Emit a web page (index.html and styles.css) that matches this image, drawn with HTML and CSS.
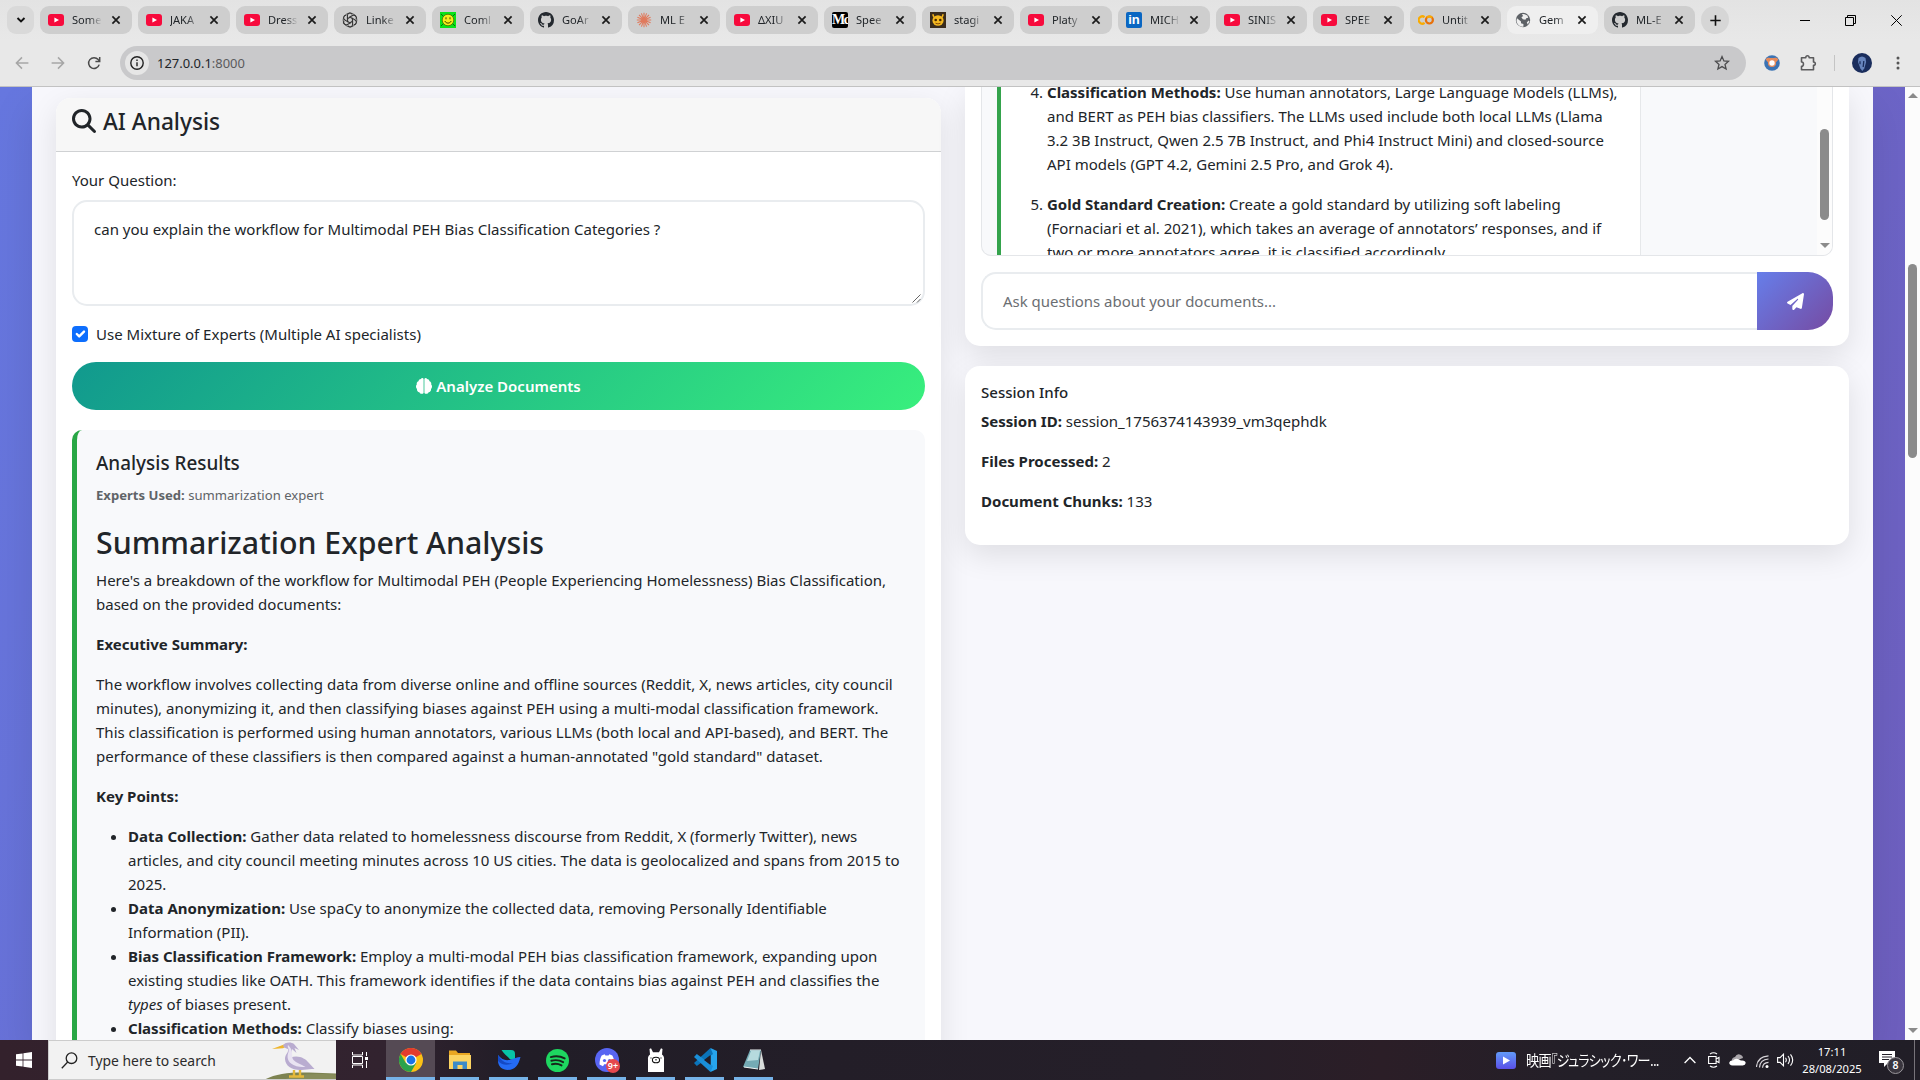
FILE: index.html
```html
<!DOCTYPE html>
<html lang="en">
<head>
<meta charset="utf-8">
<title>Gemini Document Analysis</title>
<link rel="stylesheet" href="styles.css">
</head>
<body>
<svg class="defs" aria-hidden="true">
  <symbol id="yt" viewBox="0 0 16 16"><rect y="2" width="16" height="12" rx="3" fill="#f70a3c"/><path d="M6.4 5.4v5.2L11 8z" fill="#fff"/></symbol>
  <symbol id="x" viewBox="0 0 10 10"><path d="M1.4 1.4l7.2 7.2M8.6 1.4L1.4 8.6" stroke="#1b1b1b" stroke-width="1.7" fill="none"/></symbol>
  <symbol id="gh" viewBox="0 0 16 16"><path fill="#24292f" d="M8 0C3.58 0 0 3.58 0 8c0 3.54 2.29 6.53 5.47 7.59.4.07.55-.17.55-.38 0-.19-.01-.82-.01-1.49-2.01.37-2.53-.49-2.69-.94-.09-.23-.48-.94-.82-1.13-.28-.15-.68-.52-.01-.53.63-.01 1.08.58 1.23.82.72 1.21 1.87.87 2.33.66.07-.52.28-.87.51-1.07-1.78-.2-3.64-.89-3.64-3.95 0-.87.31-1.59.82-2.15-.08-.2-.36-1.02.08-2.12 0 0 .67-.21 2.2.82.64-.18 1.32-.27 2-.27s1.36.09 2 .27c1.53-1.04 2.2-.82 2.2-.82.44 1.1.16 1.92.08 2.12.51.56.82 1.27.82 2.15 0 3.07-1.87 3.75-3.65 3.95.29.25.54.73.54 1.48 0 1.07-.01 1.93-.01 2.2 0 .21.15.46.55.38A8.01 8.01 0 0 0 16 8c0-4.42-3.58-8-8-8"/></symbol>
  <symbol id="oa" viewBox="0 0 16 16"><g fill="none" stroke="#333" stroke-width="1.1"><path id="petal" d="M8 5.2L5.4 6.7V3.6a2.6 2.6 0 0 1 4.9-1.2"/><use href="#petal" transform="rotate(60 8 8)"/><use href="#petal" transform="rotate(120 8 8)"/><use href="#petal" transform="rotate(180 8 8)"/><use href="#petal" transform="rotate(240 8 8)"/><use href="#petal" transform="rotate(300 8 8)"/><circle cx="8" cy="8" r="6.9" stroke-width=".7"/></g></symbol>
</svg>

<header class="browser">
  <div class="tabstrip">
    <button class="tab-search"><svg width="10" height="8" viewBox="0 0 10 8"><path d="M1.5 2L5 5.5 8.5 2" fill="none" stroke="#111" stroke-width="1.9"/></svg></button>
    <div class="tabs">
      <div class="tab"><svg class="fav"><use href="#yt"/></svg><span>Some</span><svg class="close"><use href="#x"/></svg></div>
      <div class="tab"><svg class="fav"><use href="#yt"/></svg><span>JAKA</span><svg class="close"><use href="#x"/></svg></div>
      <div class="tab"><svg class="fav"><use href="#yt"/></svg><span>Dress</span><svg class="close"><use href="#x"/></svg></div>
      <div class="tab"><svg class="fav"><use href="#oa"/></svg><span>Linke</span><svg class="close"><use href="#x"/></svg></div>
      <div class="tab"><svg class="fav" viewBox="0 0 16 16"><path d="M0 0h16v16H0z" fill="#0be31a"/><circle cx="8" cy="8" r="5.8" fill="#f6ee1b" stroke="#4c6a00" stroke-width=".8"/><path d="M6 5.3v2M10 5.3v2M4.8 9c1.2 2.8 5.2 2.8 6.4 0" stroke="#3c3c00" fill="none"/><path d="M1 2l2 2M15 2l-2 2M1 14l2-2M15 14l-2-2" stroke="#096b0c"/></svg><span>Coml</span><svg class="close"><use href="#x"/></svg></div>
      <div class="tab"><svg class="fav"><use href="#gh"/></svg><span>GoAr</span><svg class="close"><use href="#x"/></svg></div>
      <div class="tab"><svg class="fav" viewBox="0 0 16 16"><path d="M8 .8v14.400M.8 8h14.400M3 2.800l10 10.400M13 2.800L3 13.200M5.400 1.400l5.200 13.200M10.600 1.400L5.400 14.600M1.400 5.200l13.200 5.600M14.600 5.200L1.400 10.800" stroke="#e07a5d" stroke-width="1.100"/></svg><span>ML E</span><svg class="close"><use href="#x"/></svg></div>
      <div class="tab"><svg class="fav"><use href="#yt"/></svg><span>ΔXIU</span><svg class="close"><use href="#x"/></svg></div>
      <div class="tab"><b class="fav medium">M<i>c</i></b><span>Spee</span><svg class="close"><use href="#x"/></svg></div>
      <div class="tab"><svg class="fav" viewBox="0 0 16 16"><path d="M0 0h16v16H0z" fill="#3a2c1d"/><path d="M4 5.500L2.800 2.200M12 5.500l1.200-3.300" stroke="#f2b21c" stroke-width="1.600"/><ellipse cx="8" cy="8.500" rx="5.600" ry="5.200" fill="#f5b920"/><circle cx="5.700" cy="8" r="1.300" fill="#4a2a00"/><circle cx="10.300" cy="8" r="1.300" fill="#4a2a00"/><path d="M5.500 11.200q2.500 1.400 5 0" stroke="#8c4d05" fill="none"/></svg><span>stagi</span><svg class="close"><use href="#x"/></svg></div>
      <div class="tab"><svg class="fav"><use href="#yt"/></svg><span>Platy</span><svg class="close"><use href="#x"/></svg></div>
      <div class="tab"><b class="fav linkedin">in</b><span>MICH</span><svg class="close"><use href="#x"/></svg></div>
      <div class="tab"><svg class="fav"><use href="#yt"/></svg><span>SINIS</span><svg class="close"><use href="#x"/></svg></div>
      <div class="tab"><svg class="fav"><use href="#yt"/></svg><span>SPEE</span><svg class="close"><use href="#x"/></svg></div>
      <div class="tab"><svg class="fav" viewBox="0 0 16 16"><g fill="none" stroke-width="2.2"><path d="M6.6 5.2a3.6 3.6 0 1 0 0 5.6" stroke="#f9ab00"/><circle cx="11.4" cy="8" r="3.5" stroke="#e8710a"/><path d="M9 5.6a3.5 3.5 0 0 1 4.9 0" stroke="#f9ab00"/></g></svg><span>Untit</span><svg class="close"><use href="#x"/></svg></div>
      <div class="tab active"><svg class="fav" viewBox="0 0 16 16"><circle cx="8" cy="8" r="7.2" fill="#5d6166"/><path d="M2 6.2l4 3.4v1.6L8.4 12v2.8c-4 .4-7-3-6.9-6.6zM6.8 2.2L9 2l3.4 1.600.8 2.200-2 .4-.8 1.600-2.600-.6-1.400-2L8.200 4zM13.600 8.400l.8 1-1.600 3-1-2z" fill="#efefef"/></svg><span>Gem</span><svg class="close"><use href="#x"/></svg></div>
      <div class="tab"><svg class="fav"><use href="#gh"/></svg><span>ML-E</span><svg class="close"><use href="#x"/></svg></div>
    </div>
    <button class="new-tab"><svg width="11" height="11" viewBox="0 0 11 11"><path d="M5.5.3v10.4M.3 5.5h10.4" stroke="#111" stroke-width="1.6"/></svg></button>
    <div class="window-controls">
      <svg width="10" height="10" viewBox="0 0 10 10"><path d="M0 5.5h10" stroke="#000"/></svg>
      <svg width="11" height="11" viewBox="0 0 11 11"><path d="M.5 2.5h8v8h-8zM2.5 2.5v-2h8v8h-2" fill="none" stroke="#000"/></svg>
      <svg width="11" height="11" viewBox="0 0 11 11"><path d="M.3.3l10.4 10.4M10.7.3L.3 10.7" stroke="#000"/></svg>
    </div>
  </div>
  <div class="toolbar">
    <nav class="nav-buttons">
      <svg width="14" height="14" viewBox="0 0 14 14"><path d="M13.4 7H1.6M7 1.4L1.4 7 7 12.6" fill="none" stroke="#a6a6a6" stroke-width="1.5"/></svg>
      <svg width="14" height="14" viewBox="0 0 14 14"><path d="M.6 7h11.8M7 1.4L12.6 7 7 12.6" fill="none" stroke="#a6a6a6" stroke-width="1.5"/></svg>
      <svg width="14" height="14" viewBox="0 0 14 14"><path d="M12.2 8.6A5.4 5.4 0 1 1 11.2 3.6L12.6 5M12.7 1v4.4H8.4" fill="none" stroke="#4a4a4a" stroke-width="1.5"/></svg>
    </nav>
    <div class="omnibox">
      <span class="site-info"><svg width="14" height="14" viewBox="0 0 14 14"><circle cx="7" cy="7" r="6.2" fill="none" stroke="#222" stroke-width="1.4"/><path d="M7 6.2v4M7 3.6v1.4" stroke="#222" stroke-width="1.4"/></svg></span>
      <span class="url">127.0.0.1<em>:8000</em></span>
      <svg class="star" width="16" height="16" viewBox="0 0 16 16"><path d="M8 1.6l1.9 4.3 4.6.4L11 9.4l1.1 4.6L8 11.6 3.9 14 5 9.4 1.5 6.3l4.6-.4z" fill="none" stroke="#4c4c4e" stroke-width="1.3"/></svg>
    </div>
    <div class="extensions">
      <svg width="16" height="16" viewBox="0 0 16 16"><circle cx="8" cy="8" r="7.8" fill="#3b73b4"/><path d="M1.6 4.5C3 1.8 6 3 8 3s5-1.2 6.4 1.5L11.4 8H4.6z" fill="#e58a5b"/><circle cx="8" cy="8" r="3.4" fill="#fff" stroke="#e58a5b" stroke-width="1.4"/></svg>
      <svg class="puzzle" width="18" height="18" viewBox="0 0 18 18"><path d="M2.500 3.700h4.300c-.4-2.600 3.700-2.600 3.300 0h4.400v4.400c2.400-.4 2.400 3.600 0 3.200v4.500h-12v-3.500c2.600.3 2.600-4.700 0-4.300z" fill="none" stroke="#5b5b5d" stroke-width="1.600" stroke-linejoin="round"/></svg>
      <i class="divider"></i>
      <svg width="20" height="20" viewBox="0 0 20 20"><circle cx="10" cy="10" r="10" fill="#1a2d5c"/><path d="M6.500 5q3.500-3 7 0l.6 4-1.800 6.600-2 2.400-2-2.800L6 9z" fill="#6785bd"/><path d="M8 8.200v3M11.800 8l-.6 6" stroke="#1a2d5c" stroke-width="1.300"/></svg>
      <svg class="menu" width="4" height="14" viewBox="0 0 4 14"><g fill="#555"><circle cx="2" cy="2" r="1.5"/><circle cx="2" cy="7" r="1.5"/><circle cx="2" cy="12" r="1.5"/></g></svg>
    </div>
  </div>
</header>

<main class="viewport">
  <div class="page">
    <div class="container">
      <section class="card analysis">
        <h4 class="card-header"><svg width="24" height="24" viewBox="0 0 512 512"><path fill="#212529" d="M416 208c0 45.900-14.900 88.300-40 122.700L502.600 457.400c12.500 12.500 12.500 32.800 0 45.300s-32.800 12.500-45.300 0L330.700 376c-34.400 25.200-76.800 40-122.700 40C93.100 416 0 322.900 0 208S93.100 0 208 0S416 93.100 416 208zM208 352a144 144 0 1 0 0-288 144 144 0 1 0 0 288z"/></svg>AI Analysis</h4>
        <div class="card-body">
          <label class="question-label">Your Question:</label>
          <div class="textarea">can you explain the workflow for Multimodal PEH Bias Classification Categories ?<svg class="grip" width="9" height="9" viewBox="0 0 9 9"><path d="M8.500.5l-8 8M8.500 5l-3.500 3.500" stroke="#666"/></svg></div>
          <div class="check"><span class="box"><svg width="16" height="16" viewBox="0 0 20 20"><path d="M6 10l3 3 6-6" fill="none" stroke="#fff" stroke-width="3" stroke-linecap="round" stroke-linejoin="round"/></svg></span>Use Mixture of Experts (Multiple AI specialists)</div>
          <button class="analyze"><svg width="16" height="16" viewBox="0 0 16 16"><path fill="#fff" d="M7.600 1v14c-1 1.300-3.600 1.200-4.200-.8C1.600 14 .8 12.600 1 11-.3 9.800-.3 7.500.8 6.500.4 4.900 1.300 3.700 2.500 3.300 2.700 1.700 3.800 1 4.900 1 5.500-.3 7.300-.2 7.600 1zM8.400 1v14c1 1.300 3.600 1.200 4.200-.8 1.800-.2 2.600-1.600 2.400-3.200 1.300-1.200 1.300-3.500.2-4.500.4-1.600-.5-2.800-1.700-3.200-.2-1.600-1.300-2.300-2.400-2.300C10.500-.3 8.700-.2 8.400 1z"/></svg>Analyze Documents</button>
          <article class="results">
            <h5>Analysis Results</h5>
            <small><b>Experts Used:</b> summarization expert</small>
            <h2>Summarization Expert Analysis</h2>
            <p>Here's a breakdown of the workflow for Multimodal PEH (People Experiencing Homelessness) Bias Classification,<br>based on the provided documents:</p>
            <p><b>Executive Summary:</b></p>
            <p>The workflow involves collecting data from diverse online and offline sources (Reddit, X, news articles, city council<br>minutes), anonymizing it, and then classifying biases against PEH using a multi-modal classification framework.<br>This classification is performed using human annotators, various LLMs (both local and API-based), and BERT. The<br>performance of these classifiers is then compared against a human-annotated "gold standard" dataset.</p>
            <p><b>Key Points:</b></p>
            <ul>
              <li><b>Data Collection:</b> Gather data related to homelessness discourse from Reddit, X (formerly Twitter), news<br>articles, and city council meeting minutes across 10 US cities. The data is geolocalized and spans from 2015 to<br>2025.</li>
              <li><b>Data Anonymization:</b> Use spaCy to anonymize the collected data, removing Personally Identifiable<br>Information (PII).</li>
              <li><b>Bias Classification Framework:</b> Employ a multi-modal PEH bias classification framework, expanding upon<br>existing studies like OATH. This framework identifies if the data contains bias against PEH and classifies the<br><i>types</i> of biases present.</li>
              <li><b>Classification Methods:</b> Classify biases using:</li>
            </ul>
          </article>
        </div>
      </section>

      <div class="side">
        <section class="card chat">
          <div class="messages">
            <div class="message">
              <ol start="4">
                <li><b>Classification Methods:</b> Use human annotators, Large Language Models (LLMs),<br>and BERT as PEH bias classifiers. The LLMs used include both local LLMs (Llama<br>3.2 3B Instruct, Qwen 2.5 7B Instruct, and Phi4 Instruct Mini) and closed-source<br>API models (GPT 4.2, Gemini 2.5 Pro, and Grok 4).</li>
                <li><b>Gold Standard Creation:</b> Create a gold standard by utilizing soft labeling<br>(Fornaciari et al. 2021), which takes an average of annotators’ responses, and if<br>two or more annotators agree, it is classified accordingly.</li>
              </ol>
            </div>
            <div class="scrollbar inner"><i class="thumb"></i><i class="down"></i></div>
          </div>
          <div class="ask">
            <div class="field">Ask questions about your documents...</div>
            <button class="send"><svg width="17" height="17" viewBox="0 0 512 512"><path fill="#fff" d="M498.100 5.600c10.100 7 15.400 19.100 13.500 31.200l-64 416c-1.500 9.700-7.400 18.200-16 23s-18.900 5.400-28 1.600L284 427.700l-68.500 74.100c-8.900 9.700-22.900 12.900-35.200 8.100S160 493.200 160 480v-83.600c0-4 1.500-7.800 4.200-10.800L331.800 202.800c5.800-6.300 5.600-16-.4-22s-15.700-6.400-22-.7L106 360.800l-88.300-44.200C7.100 311.300.3 300.700 0 288.900s5.900-22.800 16.100-28.700l448-256c10.700-6.100 23.900-5.500 34 1.400z"/></svg></button>
          </div>
        </section>
        <section class="card session">
          <h6>Session Info</h6>
          <p><b>Session ID:</b> session_1756374143939_vm3qephdk</p>
          <p><b>Files Processed:</b> 2</p>
          <p><b>Document Chunks:</b> 133</p>
        </section>
      </div>
    </div>
  </div>
  <div class="scrollbar outer"><i class="up"></i><i class="thumb"></i><i class="down"></i></div>
</main>

<footer class="taskbar">
  <button class="start"><svg width="16" height="16" viewBox="0 0 16 16"><path fill="#fff" d="M0 2.300l6.600-.9v6.200H0zM7.400 1.300L16 0v7.600H7.400zM0 8.400h6.600v6.200L0 13.700zM7.400 8.400H16V16l-8.600-1.300z"/></svg></button>
  <div class="search">
    <svg width="17" height="17" viewBox="0 0 17 17"><circle cx="10.500" cy="6.200" r="5.300" fill="none" stroke="#222" stroke-width="1.3"/><path d="M6.700 10L.8 16.200" stroke="#222" stroke-width="1.3"/></svg>
    <span>Type here to search</span>
    <svg class="heron" width="72" height="40" viewBox="0 0 72 40"><path d="M0 40C10 34 25 32 45 32.500l27 1V40z" fill="#7d8351"/><path d="M30 36.500c10-3 28-3 42-2V40H18z" fill="#8f9463" opacity=".6"/><path d="M8 9L20 4.500l2.500 2-3.500 1.700z" fill="#eeb52c"/><path d="M19 6c1-4 8-4.500 11-2l5 6-4.500-2 2 5-4.500-4c0 4-2.500 6-1.500 8.500 8-3 15 1 18 5l6 6.500c-6-.5-8 .8-13 1-10 .3-16-4-16.500-11 0-5 4-6.500 3-10-2-.8-3.500-1-5-3z" fill="#b9acd0"/><path d="M24 5c-1 3 1.500 3 .5 7-2 5-1 10 5 13 4 2 8 2 12 2-5-3-9-4-12-7-3-4 1-9-5.500-15z" fill="#e9e3f2"/><path d="M30 30v6M36 30v6M25 36.500h7M32 36.500h8" stroke="#e5b93a" stroke-width="2.400"/></svg>
  </div>
  <button class="taskview"><svg width="17" height="16" viewBox="0 0 17 16"><path d="M.5 0v3h10V0M.5 16v-3h10v3M.5 4.500h10v7H.5zM14.500 0v4M14.500 9v7" fill="none" stroke="#fff"/><path d="M13 5h3v3h-3z" fill="#fff"/></svg></button>
  <div class="apps">
    <div class="app current"><svg width="24" height="24" viewBox="0 0 24 24"><circle cx="12" cy="12" r="12" fill="#fbc116"/><path d="M12 12L1.600 6A12 12 0 0 1 22.400 6z" fill="#e33b2e"/><path d="M12 12L6.800 15 1.600 6A12 12 0 0 0 12 24l5.200-9z" fill="#2ba24c"/><circle cx="12" cy="12" r="5.600" fill="#fff"/><circle cx="12" cy="12" r="4.400" fill="#1a73e8"/></svg></div>
    <div class="app"><svg width="24" height="22" viewBox="0 0 24 22"><path d="M1 1.500h7l2 2.500h12v16H1z" fill="#eaa722"/><path d="M1 6h22v14H1z" fill="#fcd462"/><path d="M5 20v-7.500h14V20h-4.500v-4h-5v4z" fill="#3c8bc8"/></svg></div>
    <div class="app"><svg width="24" height="22" viewBox="0 0 24 22"><path d="M4.500 1H14c3 0 4 1.500 4 4v6l-4.500-.5C10 7 7 5 4.500 1z" fill="#08c5a7"/><path d="M1 6c4 5 8 6 13 4.500 3-1 6-2.500 9.500-2.500C21.500 16 18 21 11 21 5 21 1 17 1 12z" fill="#246bf4"/><path d="M1 6c4 7 9 9 15 8-5 3-12 2-15-2z" fill="#1449c4"/></svg></div>
    <div class="app"><svg width="23" height="23" viewBox="0 0 24 24"><circle cx="12" cy="12" r="12" fill="#1ed760"/><path d="M5 8.400c5-1.500 10-1 14.500 1.400M5.600 12.300c4.300-1.200 8.500-.7 12.300 1.400M6.200 15.900c3.500-.9 7-.5 10 1.200" fill="none" stroke="#17261b" stroke-width="2" stroke-linecap="round"/></svg></div>
    <div class="app discord"><svg width="24" height="24" viewBox="0 0 24 24"><circle cx="12" cy="12" r="12" fill="#5865f2"/><path d="M4.500 16.500c0-4 1-7 2.200-9l3-1.200.7 1.200h3.200l.7-1.200 3 1.200c1.200 2 2.200 5 2.200 9l-3.500 1.700-1.200-2H9.200l-1.200 2z" fill="#fff"/><circle cx="9.500" cy="12.500" r="1.600" fill="#5865f2"/><circle cx="14.500" cy="12.500" r="1.600" fill="#5865f2"/></svg><b class="badge">9+</b></div>
    <div class="app"><svg width="18" height="24" viewBox="0 0 18 24"><path d="M1 24V12q-.5-4 2-5.500L2.500 1 4 .3l2 4h6l2-4 1.500.7-.5 5.500q2.500 1.500 2 5.500v12z" fill="#fff"/><g fill="none" stroke="#111" stroke-width="1.100"><ellipse cx="9" cy="12" rx="3.600" ry="2.800"/><path d="M9 11v1.500M4 9.500v1M14 9.500v1"/></g></svg></div>
    <div class="app"><svg width="24" height="24" viewBox="0 0 24 24"><path d="M17.500 0L24 3v18l-6.500 3z" fill="#27a5ed"/><path d="M17.500 0L1 15l2.800 3L20 6z" fill="#0b74ba"/><path d="M17.500 24L1 9l2.800-3L20 18z" fill="#1a8fd8"/><path d="M17.500 7v10L11 12z" fill="#211d27"/></svg></div>
    <div class="app"><svg width="24" height="22" viewBox="0 0 24 22"><path d="M19 1l4 19-6 1z" fill="#d9dddc"/><path d="M8 1h11l-3 19L1 18z" fill="#74abb5"/><path d="M9 2h9l-2 9-11 1z" fill="#b6dade"/><path d="M8 1h11M2 18l14 2" stroke="#eef3f3" stroke-width="1.200"/></svg></div>
  </div>
  <div class="tray">
    <svg class="play" width="20" height="17" viewBox="0 0 20 17"><defs><linearGradient id="pg" x2="0" y2="1"><stop stop-color="#629af8"/><stop offset="1" stop-color="#5a50e8"/></linearGradient></defs><rect width="20" height="17" rx="3" fill="url(#pg)"/><path d="M7 4.500v8l7-4z" fill="#fff"/></svg>
    <span class="news">映画『ジュラシック･ワー...</span>
    <svg class="caret" width="12" height="8" viewBox="0 0 12 8"><path d="M.6 7L6 1.500 11.400 7" fill="none" stroke="#fff" stroke-width="1.300"/></svg>
    <svg class="cam" width="12" height="16" viewBox="0 0 12 16"><path d="M2 2q3.500-2.500 7 0M2 14q3.500 2.500 7 0M.6 4.500h7.500v7H.6zM8 7l3-1.500v5L8 9" fill="none" stroke="#fff" stroke-width="1.100"/></svg>
    <svg class="cloud" width="17" height="12" viewBox="0 0 17 12"><path d="M3 8q-1-4 3-5 2-4 6-2 2 1 2 3z" fill="#a9a5aa"/><path d="M3.500 11.500q-3.500-.3-3.200-3Q1 6 4 6.500 6 4 9 5l3 1.500Q16.500 6 16.700 9q-.2 2.300-3 2.500z" fill="#fff"/></svg>
    <svg class="wifi" width="13" height="13" viewBox="0 0 13 13"><path d="M.5 12Q1 1.500 12.500.8M3.500 12.500Q4 4.500 12.500 4M6.500 12.700q.5-5 6-5.300" fill="none" stroke="#d8d5da" stroke-width="1.200"/><circle cx="11" cy="11.500" r="1.500" fill="#fff"/></svg>
    <svg class="vol" width="17" height="14" viewBox="0 0 17 14"><path d="M.6 4.600h2.500L6.500 1.200v11.600L3.100 9.400H.6zM8.500 4.800q1.600 2.200 0 4.400M11 3q3 4 0 8M13.500 1.300q4.400 5.700 0 11.400" fill="none" stroke="#fff" stroke-width="1.100"/></svg>
    <div class="clock"><span>17:11</span><span>28/08/2025</span></div>
    <div class="notify"><svg width="16" height="16" viewBox="0 0 16 16"><path d="M0 0h16v12H9l-4 4v-4H0z" fill="#fff"/><path d="M3 3.500h10M3 6h10M3 8.500h7" stroke="#231f28"/></svg><b class="count">8</b></div>
    <i class="peek"></i>
  </div>
</footer>
</body>
</html>
```
FILE: styles.css
```css
* { box-sizing: border-box; }
body {
  margin: 0;
  width: 1920px;
  height: 1080px;
  overflow: hidden;
  display: flex;
  flex-direction: column;
  font: 15.02px/24px "Noto Sans", "Open Sans", sans-serif;
  color: #212529;
}
svg { flex: none; display: block; }
button { border: 0; padding: 0; background: none; font: inherit; display: flex; align-items: center; justify-content: center; flex: none; }
h2, h4, h5, h6, p, ul, ol { margin: 0; }
b { font-weight: 700; }
.defs { width: 0; height: 0; position: absolute; }

/* Browser frame */
.browser { height: 87px; flex: none; background: #e8e8e8; border-bottom: 1px solid #c2c2c2; }
.tabstrip { height: 40px; display: flex; align-items: center; padding-left: 7px; background: linear-gradient(#e3e3e3, #e8e8e8); }
.tab-search { width: 27px; height: 28px; border-radius: 9px; background: #d9d9d9; }
.tabs { display: flex; gap: 6px; margin-left: 6px; }
.tab { flex: none; width: 92px; height: 28px; border-radius: 9px; background: #cecece; display: flex; align-items: center; padding: 0 11px 0 8px; font-size: 11.1px; line-height: 28px; }
.tab:nth-child(n+13) { width: 91px; }
.tab.active { background: #efefef; }
.fav { width: 16px; height: 16px; flex: none; }
.tab span { width: 30px; margin-left: 8px; white-space: nowrap; -webkit-mask-image: linear-gradient(90deg, #000 55%, transparent); mask-image: linear-gradient(90deg, #000 55%, transparent); }
.close { width: 10px; height: 10px; margin-left: auto; }
.medium { background: #000; color: #fff; font: 700 14px/16px "Liberation Serif", serif; overflow: hidden; border-radius: 2px; white-space: nowrap; letter-spacing: -1.5px; }
.medium i { font-style: normal; }
.linkedin { background: #0a66c2; color: #fff; font: 700 13px/15px "Liberation Sans", sans-serif; border-radius: 2px; text-align: center; }
.new-tab { width: 28px; height: 28px; border-radius: 50%; background: #d6d6d6; margin-left: 6px; }
.window-controls { display: flex; align-items: center; gap: 35px; margin-left: auto; padding-right: 18px; }
.toolbar { height: 46px; display: flex; align-items: center; }
.nav-buttons { display: flex; gap: 22px; padding-left: 15px; width: 120px; flex: none; }
.omnibox { width: 1626px; height: 34px; border-radius: 17px; background: #c9c9cb; display: flex; align-items: center; padding: 0 16px 0 5px; }
.site-info { width: 24px; height: 24px; border-radius: 50%; background: #e6e6e6; display: flex; align-items: center; justify-content: center; }
.url { margin-left: 8px; font-size: 12.95px; }
.url em { font-style: normal; color: #5a5a5c; }
.star { margin-left: auto; }
.extensions { flex: 1; display: flex; align-items: center; padding-left: 18px; }
.puzzle { margin-left: 19px; }
.divider { width: 1px; height: 16px; background: #c4c4c4; margin-left: 17px; }
.divider + svg { margin-left: 17px; }
.menu { margin-left: 24px; }

/* Page */
.viewport { height: 953px; flex: none; display: flex; overflow: hidden; }
.page { width: 1905px; padding: 0 32px; background: linear-gradient(120deg, #6677df, #6a6bd0 50%, #6e5fbf); }
.container { height: 953px; display: grid; grid-template-columns: 885px 884px; column-gap: 24px; padding: 0 24px; background: #f7f7fc; box-shadow: 0 20px 40px rgba(0,0,0,.1); }
.card { background: #fff; border-radius: 15px; box-shadow: 0 10px 30px rgba(0,0,0,.1); }
.analysis { margin-top: 11px; height: 1100px; }
.card-header { height: 54px; display: flex; align-items: center; gap: 7px; padding: 0 16px 5px; background: #f7f7f7; border-bottom: 1px solid #cfd1d3; border-radius: 15px 15px 0 0; font-size: 22.7px; font-weight: 500; }
.card-header svg { margin-top: -2px; }
.card-body { padding: 16px 16px; }
.question-label { display: block; height: 32px; }
.textarea { height: 106px; border: 2px solid #e9ecef; border-radius: 15px; padding: 15px 20px; position: relative; }
.grip { position: absolute; right: 2px; bottom: 1px; }
.check { display: flex; align-items: center; height: 24px; margin-top: 16px; }
.box { width: 16px; height: 16px; border-radius: 4px; background: #0d6efd; margin-right: 8px; }
.analyze { width: 100%; height: 48px; margin-top: 16px; border-radius: 25px; background: linear-gradient(135deg, #11998e, #38ef7d); color: #fff; font-weight: 600; gap: 4px; }
.results { margin-top: 20px; height: 720px; border-left: 5px solid #28a745; border-radius: 10px; background: #f8f9fb; padding: 20px 19px; white-space: nowrap; }
.results h5 { font-size: 18.9px; font-weight: 500; line-height: 24px; margin-top: 1px; }
.results small { display: block; font-size: 13.1px; line-height: 21px; margin-top: 10px; color: #5f6468; }
.results h2 { font-size: 30.3px; font-weight: 500; line-height: 38px; margin: 18px 0 6px; }
.results p { margin-bottom: 16px; }
.results ul { padding-left: 32px; }

.side { display: flex; flex-direction: column; gap: 20px; }
.chat { height: 259px; border-radius: 0 0 15px 15px; padding: 0 16px; }
.messages { height: 169px; border: 1px solid #e4e6e9; border-top: 0; border-radius: 0 0 10px 10px; background: #f8f9fb; padding-left: 15px; overflow: hidden; display: flex; }
.message { width: 644px; height: 168px; flex: none; border-left: 4px solid #34a34c; border-right: 1px solid #e6e8ea; background: #fff; padding-left: 15px; white-space: nowrap; overflow: hidden; font-size: 15px; }
.message ol { margin-top: -7px; padding-left: 31px; }
.message li + li { margin-top: 16px; }
.ask { display: flex; height: 58px; margin-top: 16px; }
.field { flex: 1; border: 2px solid #e9ecef; border-right: 0; border-radius: 15px 0 0 15px; padding-left: 20px; line-height: 55px; color: #6b6e72; font-size: 14.95px; }
.send { width: 76px; border-radius: 0 25px 25px 0; background: linear-gradient(135deg, #667eea, #764ba2); }
.session { height: 179px; padding: 14px 16px; }
.session h6 { font-size: 15.02px; font-weight: 500; line-height: 24px; margin-bottom: 5px; }
.session p { margin-bottom: 16px; }

/* Scrollbars */
.scrollbar { width: 15px; flex: none; background: #fcfcfc; display: flex; flex-direction: column; align-items: center; }
.scrollbar i { flex: none; }
.thumb { width: 9px; border-radius: 5px; background: #8b8b8b; }
.up, .down { width: 0; height: 0; border: 5px solid transparent; }
.up { border-top: 0; border-bottom: 5px solid #8b8b8b; }
.down { border-bottom: 0; border-top: 5px solid #8b8b8b; }
.outer .up { margin-top: 6px; }
.outer .thumb { height: 194px; margin-top: 166px; }
.outer .down { margin-top: 570px; }
.inner { margin-left: auto; }
.inner .thumb { height: 91px; margin-top: 42px; }
.inner .down { margin-top: 23px; }

/* Taskbar */
.taskbar { height: 40px; flex: none; display: flex; background: linear-gradient(90deg, #33212c, #32232f 20%, #211d27 27%, #251f29 60%, #2b1e27 72%, #231f28 82%, #211e27); color: #fff; }
.start { width: 48px; }
.search { width: 288px; background: #f2f2f2; border: 1px solid #ccc; border-right: 0; display: flex; align-items: center; padding-left: 12px; color: #2b2b2b; overflow: hidden; }
.search span { margin-left: 10px; font-size: 13.9px; width: 138px; white-space: nowrap; padding-top: 1px; }
.heron { margin-left: auto; }
.taskview { width: 49px; }
.apps { display: flex; margin-left: 1px; }
.app { width: 49px; height: 40px; display: flex; align-items: center; justify-content: center; background: linear-gradient(#76b3e8, #76b3e8) 50% 100% / 39px 3px no-repeat; position: relative; }
.app.current { width: 49px; background-color: #554a54; background-size: 100% 3px; }
.badge { position: absolute; left: 24px; top: 19px; width: 14px; height: 14px; border-radius: 50%; background: #e5484d; color: #fff; font: 600 9px/14px "Noto Sans", sans-serif; text-align: center; }
.tray { margin-left: auto; display: flex; align-items: center; }
.news { font: 15px/24px "Noto Sans CJK JP", sans-serif; font-feature-settings: "palt"; width: 136px; margin-left: 10px; white-space: nowrap; letter-spacing: -.8px; transform: scaleX(.875); transform-origin: 0 50%; }
.caret { margin-left: 22px; }
.cam { margin-left: 12px; }
.cloud { margin-left: 9px; }
.wifi { margin-left: 10px; margin-top: 3px; }
.vol { margin-left: 8px; }
.clock { width: 60px; margin: 1px 0 0 8px; display: flex; flex-direction: column; align-items: center; font-size: 11.2px; line-height: 18px; white-space: nowrap; }
.clock span { margin-top: -1px; }
.notify { margin-left: 17px; width: 24px; height: 24px; position: relative; padding-top: 3px; }
.count { position: absolute; left: 8px; top: 9px; width: 17px; height: 17px; border-radius: 50%; background: #39353e; border: 1px solid #9a979c; font: 600 10.5px/14px "Noto Sans", sans-serif; text-align: center; }
.peek { width: 1px; height: 40px; background: #77737a; margin: 0 5px 0 11px; }
```
